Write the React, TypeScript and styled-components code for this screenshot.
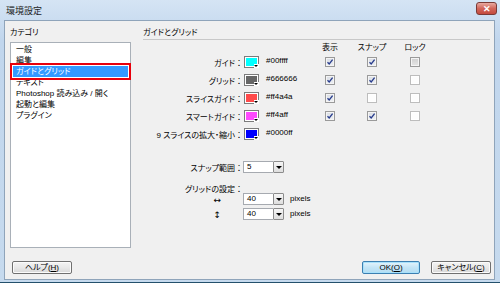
import React from 'react'
import styled, { createGlobalStyle } from 'styled-components'

const GlobalStyle = createGlobalStyle`
  html, body {
    margin: 0;
    padding: 0;
    background: #ffffff;
  }
  body {
    font-family: "Liberation Sans", "Noto Sans CJK JP", sans-serif;
    font-size: 8px;
    color: #000;
    font-feature-settings: "palt";
  }
  * {
    box-sizing: border-box;
  }
`

const Window = styled.div`
  width: 500px;
  height: 283px;
  display: flex;
  flex-direction: column;
  background: linear-gradient(#d5e4f4, #c1d6ed 40px, #c6daee);
  border-bottom: 1px solid #24506c;
`

const TitleBar = styled.div`
  height: 20px;
  display: flex;
  align-items: center;
  justify-content: space-between;
  padding: 0 3px 0 6px;
`

const Title = styled.span`
  font-size: 9px;
  color: #1e1e1e;
  margin-top: 1px;
`

const CloseButton = styled.div`
  width: 21px;
  height: 13px;
  margin-top: -3px;
  border: 1px solid #7a3a36;
  border-radius: 3px;
  background: linear-gradient(#e8a9a0, #d2665a 50%, #c44a3d);
  display: flex;
  align-items: center;
  justify-content: center;
  color: #fff;
  font-size: 9px;
  font-weight: bold;
`

const Body = styled.div`
  flex: 1;
  margin: 0 5px 2px 4px;
  border: 1px solid #8fa4ba;
  background: #f0f0f0;
  display: flex;
  flex-direction: column;
  padding: 6px 3px 5px 5px;
`

const Main = styled.div`
  flex: 1;
  display: flex;
  gap: 12px;
  min-height: 0;
`

const LeftCol = styled.div`
  width: 121px;
  display: flex;
  flex-direction: column;
`

const Caption = styled.div`
  height: 12px;
  line-height: 12px;
  margin-bottom: 3px;
`

const CategoryList = styled.div`
  flex: 1;
  background: #fff;
  border: 1px solid #a9b0b8;
  padding: 1px 1px 0 2px;
`

const Item = styled.div<{ $selected?: boolean }>`
  height: 11px;
  line-height: 11px;
  padding-left: 3px;
  white-space: nowrap;
  background: ${p => (p.$selected ? '#3399ff' : 'transparent')};
  color: ${p => (p.$selected ? '#fff' : '#000')};
  outline: ${p => (p.$selected ? '2px solid #e8000b' : 'none')};
  outline-offset: 1px;
  margin-right: 1px;
`

const RightCol = styled.div`
  flex: 1;
  display: flex;
  flex-direction: column;
`

const SectionHead = styled.div`
  height: 13px;
  line-height: 12px;
  border-bottom: 1px solid #c8c8c8;
  margin-right: 1px;
`

const GuideGrid = styled.div`
  margin-top: 3px;
  display: grid;
  grid-template-columns: 100px 22px 42px 46px 38px 48px;
  grid-template-rows: 10px repeat(5, 18px);
  align-items: center;
`

const ColHead = styled.div`
  justify-self: center;
  white-space: nowrap;
  line-height: 10px;
`

const Label = styled.div`
  text-align: right;
  white-space: nowrap;
`

const Colon = styled.span`
  font-feature-settings: normal;
  font-family: "Noto Sans CJK JP", sans-serif;
`

const Swatch = styled.div<{ $color: string }>`
  position: relative;
  width: 15px;
  height: 12px;
  margin-left: 1px;
  border: 1px solid #7b7b7b;
  background: ${p => p.$color};
  box-shadow: inset 0 0 0 1px #ffffff;
  &::after {
    content: '';
    position: absolute;
    right: -1px;
    bottom: -1px;
    width: 5px;
    height: 4px;
    background: #fff;
  }
  &::before {
    content: '';
    position: absolute;
    right: 0px;
    bottom: 0px;
    border-left: 2px solid transparent;
    border-right: 2px solid transparent;
    border-top: 2px solid #000;
    z-index: 1;
  }
`

const Hex = styled.div`
  padding-left: 1px;
  white-space: nowrap;
  margin-top: -3px;
`

const CheckBox = styled.div<{ $checked?: boolean; $dim?: boolean }>`
  justify-self: center;
  width: 10px;
  height: 10px;
  border: 1px solid ${p => (p.$checked || p.$dim ? '#9a9a9a' : '#bdbdbd')};
  background: ${p =>
    p.$dim
      ? 'linear-gradient(#cfcfcf, #e6e6e6)'
      : p.$checked
        ? 'linear-gradient(#d9dde4, #eef0f3)'
        : '#fdfdfd'};
  box-shadow: inset 0 0 0 1px ${p => (p.$checked || p.$dim ? '#f4f4f4' : '#ffffff')};
  display: flex;
  align-items: center;
  justify-content: center;
`

const FormGrid = styled.div<{ $top: number }>`
  margin-top: ${p => p.$top}px;
  display: grid;
  grid-template-columns: 100px 41px auto;
  align-items: center;
  height: 12px;
`

const ArrowCell = styled.div`
  text-align: right;
  padding-right: 22px;
  font-family: "DejaVu Sans", sans-serif;
  font-size: 9px;
  line-height: 9px;
  margin-top: 2px;
`

const GroupLabel = styled.div`
  margin-top: 11px;
  width: 100px;
  height: 9px;
  line-height: 9px;
  text-align: right;
`

const Dropdown = styled.div`
  display: flex;
  height: 12px;
`

const Field = styled.div`
  width: 30px;
  height: 12px;
  background: #fff;
  border: 1px solid #a6aab0;
  border-right: none;
  padding-left: 3px;
  line-height: 10px;
`

const DropButton = styled.div`
  width: 11px;
  height: 12px;
  border: 1px solid #8c8c8c;
  border-radius: 1px;
  background: linear-gradient(#f6f6f6, #dedede);
  display: flex;
  align-items: center;
  justify-content: center;
  &::after {
    content: '';
    border-left: 3px solid transparent;
    border-right: 3px solid transparent;
    border-top: 3px solid #000;
  }
`

const Unit = styled.div`
  padding-left: 6px;
  margin-top: -2px;
`

const Footer = styled.div`
  height: 13px;
  margin-top: 13px;
  display: flex;
  align-items: center;
`

const Button = styled.div<{ $w: number; $primary?: boolean }>`
  width: ${p => p.$w}px;
  height: 13px;
  border: 1px solid ${p => (p.$primary ? '#3c7fb1' : '#707070')};
  border-radius: 2px;
  background: ${p =>
    p.$primary
      ? 'linear-gradient(#e5f4fc, #c4e5f6 50%, #b3dcf2)'
      : 'linear-gradient(#f4f4f4, #e8e8e8 50%, #d8d8d8)'};
  box-shadow: inset 0 0 0 1px ${p => (p.$primary ? '#a8e1fb' : '#fbfbfb')};
  display: flex;
  align-items: center;
  justify-content: center;
  line-height: 11px;
  white-space: nowrap;
`

const Spacer = styled.div`
  flex: 1;
`

const Key = styled.span`
  text-decoration: underline;
`

const Tick = () => (
  <svg width="8" height="8" viewBox="0 0 8 8">
    <path d="M1.5 4.2 L3.2 6 L6.6 1.6" fill="none" stroke="#283c8c" strokeWidth="1.3" />
  </svg>
)

type Row = {
  label: string
  color: string
  show?: boolean
  snap?: boolean
  lockDim?: boolean
  checks: boolean
}

const rows: Row[] = [
  { label: 'ガイド', color: '#00ffff', show: true, snap: true, lockDim: true, checks: true },
  { label: 'グリッド', color: '#666666', show: true, snap: true, checks: true },
  { label: 'スライスガイド', color: '#ff4a4a', show: true, snap: false, checks: true },
  { label: 'スマートガイド', color: '#ff4aff', show: true, snap: true, checks: true },
  { label: '9 スライスの拡大・縮小', color: '#0000ff', checks: false },
]

const categories = ['一般', '編集', 'ガイドとグリッド', 'テキスト', 'Photoshop 読み込み / 開く', '起動と編集', 'プラグイン']

const Select = ({ value }: { value: string }) => (
  <Dropdown>
    <Field>{value}</Field>
    <DropButton />
  </Dropdown>
)

export default function App() {
  return (
    <>
      <GlobalStyle />
      <Window>
        <TitleBar>
          <Title>環境設定</Title>
          <CloseButton>✕</CloseButton>
        </TitleBar>
        <Body>
          <Main>
            <LeftCol>
              <Caption>カテゴリ</Caption>
              <CategoryList>
                {categories.map(c => (
                  <Item key={c} $selected={c === 'ガイドとグリッド'}>
                    {c}
                  </Item>
                ))}
              </CategoryList>
            </LeftCol>
            <RightCol>
              <SectionHead>ガイドとグリッド</SectionHead>
              <GuideGrid>
                <div />
                <div />
                <div />
                <ColHead>表示</ColHead>
                <ColHead>スナップ</ColHead>
                <ColHead>ロック</ColHead>
                {rows.map(r => (
                  <React.Fragment key={r.label}>
                    <Label>
                      {r.label}
                      <Colon>：</Colon>
                    </Label>
                    <Swatch $color={r.color} />
                    <Hex>{r.color}</Hex>
                    {r.checks ? (
                      <>
                        <CheckBox $checked={r.show}>{r.show && <Tick />}</CheckBox>
                        <CheckBox $checked={r.snap}>{r.snap && <Tick />}</CheckBox>
                        <CheckBox $dim={r.lockDim} />
                      </>
                    ) : (
                      <>
                        <div />
                        <div />
                        <div />
                      </>
                    )}
                  </React.Fragment>
                ))}
              </GuideGrid>
              <FormGrid $top={18}>
                <Label>
                  スナップ範囲<Colon>：</Colon>
                </Label>
                <Select value="5" />
              </FormGrid>
              <GroupLabel>
                グリッドの設定<Colon>：</Colon>
              </GroupLabel>
              <FormGrid $top={0}>
                <ArrowCell>↔</ArrowCell>
                <Select value="40" />
                <Unit>pixels</Unit>
              </FormGrid>
              <FormGrid $top={3}>
                <ArrowCell>↕</ArrowCell>
                <Select value="40" />
                <Unit>pixels</Unit>
              </FormGrid>
            </RightCol>
          </Main>
          <Footer>
            <Button $w={60} style={{ marginLeft: 2 }}>
              ヘルプ(<Key>H</Key>)
            </Button>
            <Spacer />
            <Button $w={58} $primary>
              OK(<Key>O</Key>)
            </Button>
            <Button $w={60} style={{ marginLeft: 11 }}>
              キャンセル(<Key>C</Key>)
            </Button>
          </Footer>
        </Body>
      </Window>
    </>
  )
}
